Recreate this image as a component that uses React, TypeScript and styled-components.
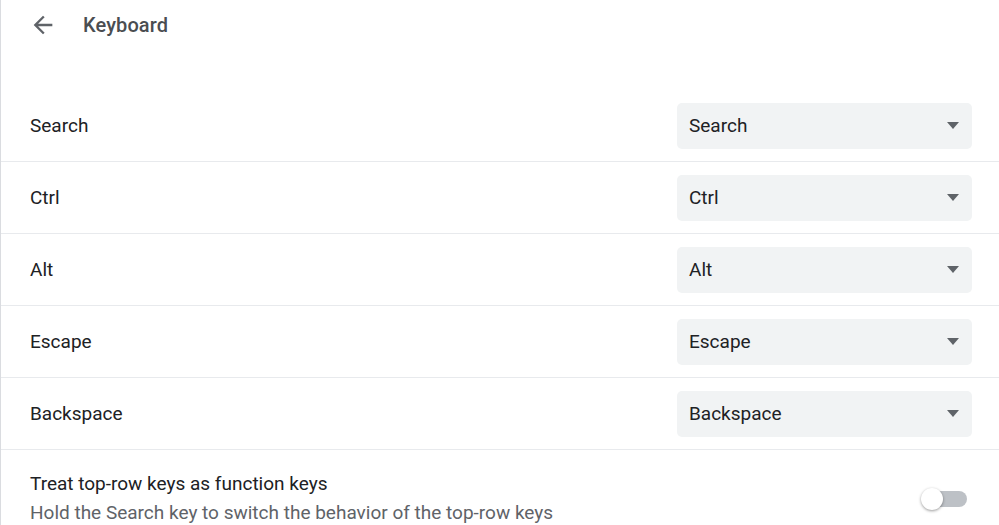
import React from 'react';
import styled, { createGlobalStyle } from 'styled-components';

const GlobalStyle = createGlobalStyle`
  html, body {
    margin: 0;
    padding: 0;
    background: #ffffff;
  }
  body {
    font-family: Roboto, "Liberation Sans", Arial, sans-serif;
    color: #202124;
  }
`;

const Page = styled.div`
  width: 998px;
  height: 525px;
  border-left: 1px solid #dadce0;
  overflow: hidden;
  display: flex;
  flex-direction: column;
`;

const Header = styled.div`
  height: 50px;
  display: flex;
  align-items: center;
  padding-left: 28px;
  margin-bottom: 40px;
`;

const BackButton = styled.button`
  width: 28px;
  height: 28px;
  padding: 0;
  border: none;
  background: none;
  display: flex;
  align-items: center;
  justify-content: center;
  color: #5f6368;
  cursor: pointer;
`;

const Title = styled.h1`
  margin: 0 0 0 26px;
  font-size: 20px;
  font-weight: 500;
  color: #4a4d51;
  letter-spacing: 0.1px;
`;

const Row = styled.div`
  height: 72px;
  box-sizing: border-box;
  display: flex;
  align-items: center;
  justify-content: space-between;
  padding: 0 27px 0 29px;
  border-bottom: 1px solid #e8eaed;
`;

const Label = styled.span`
  font-size: 19px;
`;

const Select = styled.div`
  width: 295px;
  height: 46px;
  box-sizing: border-box;
  border-radius: 5px;
  background: #f1f3f4;
  display: flex;
  align-items: center;
  justify-content: space-between;
  padding: 0 13px 0 12px;
  font-size: 19px;
  color: #202124;
`;

const Caret = styled.span`
  width: 0;
  height: 0;
  border-left: 6.5px solid transparent;
  border-right: 6.5px solid transparent;
  border-top: 7px solid #5f6368;
`;

const ToggleRow = styled.div`
  display: flex;
  align-items: center;
  justify-content: space-between;
  padding: 22px 32px 0 29px;
`;

const ToggleText = styled.div`
  display: flex;
  flex-direction: column;
  gap: 5px;
`;

const ToggleTitle = styled.span`
  font-size: 19px;
  line-height: 24px;
  color: #202124;
`;

const ToggleSub = styled.span`
  font-size: 19px;
  line-height: 24px;
  color: #5f6368;
`;

const Toggle = styled.div<{ $on?: boolean }>`
  position: relative;
  width: 45px;
  height: 16px;
  border-radius: 8px;
  background: ${(p) => (p.$on ? '#8ab4f8' : '#bdc1c6')};
`;

const Knob = styled.span<{ $on?: boolean }>`
  position: absolute;
  top: -3px;
  left: ${(p) => (p.$on ? '23px' : '-1px')};
  width: 22px;
  height: 22px;
  border-radius: 50%;
  background: #ffffff;
  box-shadow: 0 1px 3px rgba(0, 0, 0, 0.4);
`;

const keys = ['Search', 'Ctrl', 'Alt', 'Escape', 'Backspace'];

export default function App() {
  return (
    <>
      <GlobalStyle />
      <Page>
        <Header>
          <BackButton aria-label="Back">
            <svg width="28" height="28" viewBox="0 0 24 24" fill="currentColor">
              <path d="M20 11H7.83l5.59-5.59L12 4l-8 8 8 8 1.41-1.41L7.83 13H20v-2z" />
            </svg>
          </BackButton>
          <Title>Keyboard</Title>
        </Header>

        {keys.map((key) => (
          <Row key={key}>
            <Label>{key}</Label>
            <Select>
              <span>{key}</span>
              <Caret />
            </Select>
          </Row>
        ))}

        <ToggleRow>
          <ToggleText>
            <ToggleTitle>Treat top-row keys as function keys</ToggleTitle>
            <ToggleSub>Hold the Search key to switch the behavior of the top-row keys</ToggleSub>
          </ToggleText>
          <Toggle>
            <Knob />
          </Toggle>
        </ToggleRow>
      </Page>
    </>
  );
}
